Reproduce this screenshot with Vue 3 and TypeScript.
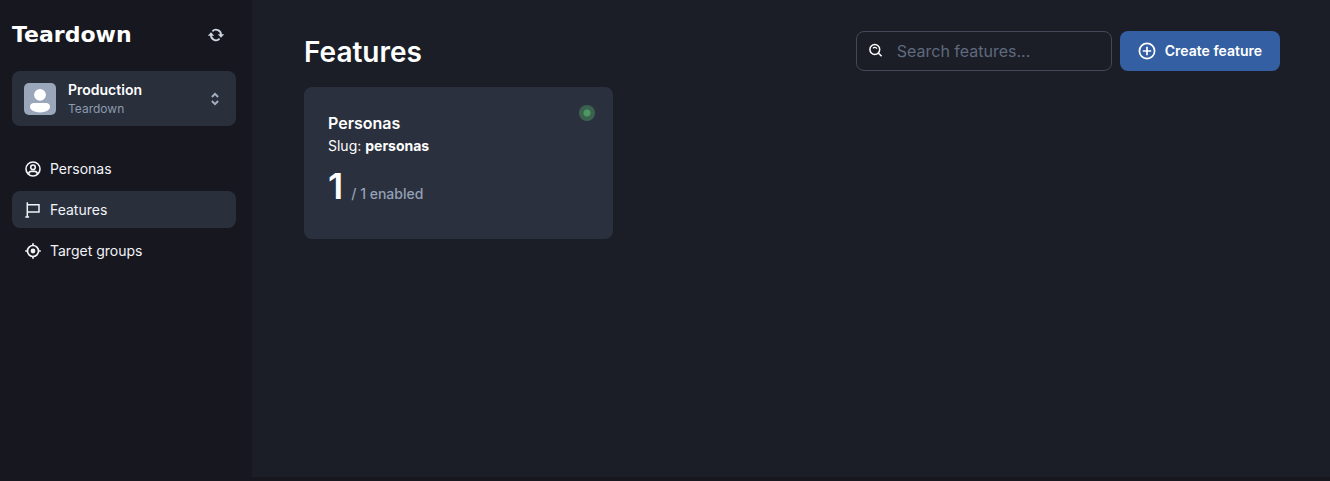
<script setup lang="ts">
import { ref, computed } from 'vue'

interface NavItem {
  id: string
  label: string
}

interface Feature {
  name: string
  slug: string
  enabled: number
  total: number
}

const navItems: NavItem[] = [
  { id: 'personas', label: 'Personas' },
  { id: 'features', label: 'Features' },
  { id: 'targets', label: 'Target groups' },
]
const active = ref<string>('features')
const query = ref<string>('')
const features: Feature[] = [{ name: 'Personas', slug: 'personas', enabled: 1, total: 1 }]

const visible = computed<Feature[]>(() =>
  features.filter((f) => f.name.toLowerCase().includes(query.value.toLowerCase())),
)
</script>

<template>
  <div class="app">
    <aside class="sidebar">
      <div class="brand">
        <span class="logo">Teardown</span>
        <button class="refresh" type="button" aria-label="Refresh">
          <svg width="18" height="18" viewBox="0 0 18 18" fill="none">
            <path d="M5.400 5.300A5 5 0 0 1 14 9M12.600 12.700A5 5 0 0 1 4 9" stroke="currentColor" stroke-width="1.8" />
            <path d="M10.800 8.300h6.400L14 11.700zM.8 9.700h6.400L4 6.300z" fill="currentColor" />
          </svg>
        </button>
      </div>

      <button class="project" type="button">
        <svg class="avatar" width="32" height="32" viewBox="0 0 32 32">
          <rect width="32" height="32" rx="5" fill="#9aa6ba" />
          <circle cx="16" cy="11.800" r="5.900" fill="#fff" />
          <path d="M10 20h12c2.400 0 4 1.600 4 3.800 0 3.600-5 5.600-10 5.600S6 27.400 6 23.800C6 21.600 7.600 20 10 20z" fill="#fff" />
        </svg>
        <span class="project-text">
          <span class="project-name">Production</span>
          <span class="project-org">Teardown</span>
        </span>
        <svg class="chevrons" width="10" height="16" viewBox="0 0 10 16" fill="none" stroke="currentColor" stroke-width="2">
          <path d="M1.900 6 5 2.900 8.100 6M1.900 10 5 13.100 8.100 10" />
        </svg>
      </button>

      <nav class="nav">
        <a
          v-for="item in navItems"
          :key="item.id"
          href="#"
          class="nav-link"
          :class="{ active: item.id === active }"
          @click.prevent="active = item.id"
        >
          <svg v-if="item.id === 'personas'" width="18" height="18" viewBox="0 0 18 18" fill="none" stroke="currentColor" stroke-width="1.600">
            <circle cx="9" cy="9" r="7" />
            <circle cx="9" cy="7.300" r="2.300" />
            <path d="M4.700 14.200c0-1.900 1.200-2.800 2.600-2.800h3.400c1.400 0 2.600.9 2.600 2.800" />
          </svg>
          <svg v-else-if="item.id === 'features'" width="18" height="18" viewBox="0 0 18 18" fill="none" stroke="currentColor" stroke-width="1.500">
            <path d="M3.300 1.200v15M1.300 16.100h3.800M3.300 3.800h11.700v7.200H3.300" />
          </svg>
          <svg v-else width="18" height="18" viewBox="0 0 18 18" fill="none" stroke="currentColor" stroke-width="1.700">
            <circle cx="9" cy="9" r="5.500" />
            <circle cx="9" cy="9" r="2.400" fill="currentColor" stroke="none" />
            <path d="M9 1.200v2.800M9 14v2.800M1.200 9h2.800M14 9h2.800" />
          </svg>
          <span>{{ item.label }}</span>
        </a>
      </nav>
    </aside>

    <main class="main">
      <header class="header">
        <h1 class="title">Features</h1>
        <div class="actions">
          <label class="search">
            <svg width="16" height="16" viewBox="0 0 16 16" fill="none" stroke="currentColor" stroke-width="1.500">
              <circle cx="6.800" cy="6.500" r="4.900" />
              <path d="M10.300 10 13.600 13.300" />
              <path d="M5 5.300c.9-1.200 3-1.200 3.900.5" stroke-width="1.200" />
            </svg>
            <input v-model="query" type="text" aria-label="Search features" placeholder="Search features..." />
          </label>
          <button class="create" type="button">
            <svg width="18" height="18" viewBox="0 0 18 18" fill="none" stroke="currentColor" stroke-width="1.700">
              <circle cx="9" cy="9" r="7.600" />
              <path d="M9 4.800v8.400M4.800 9h8.400" />
            </svg>
            <span>Create feature</span>
          </button>
        </div>
      </header>

      <section class="grid">
        <article v-for="f in visible" :key="f.slug" class="card">
          <div class="card-top">
            <h2 class="card-title">{{ f.name }}</h2>
            <span class="status" role="img" aria-label="Enabled"></span>
          </div>
          <p class="slug">Slug: <strong>{{ f.slug }}</strong></p>
          <p class="count">
            <span class="count-value">{{ f.enabled }}</span>
            <span class="count-total">/ {{ f.total }} enabled</span>
          </p>
        </article>
      </section>
    </main>
  </div>
</template>

<style>
body {
  background: #17171f;
}
</style>

<style scoped>
.app {
  display: flex;
  min-height: calc(100vh - 4px);
  background: #1b1e26;
  color: #fff;
  font-family: Inter, 'Liberation Sans', sans-serif;
  font-size: 14px;
  line-height: 20px;
}
.app * {
  box-sizing: border-box;
}
button {
  border: 0;
  font: inherit;
  color: inherit;
  cursor: pointer;
}
svg {
  display: block;
  flex: none;
}
.sidebar {
  flex: none;
  width: 252px;
  padding: 16px 16px 16px 12px;
  background: #17171f;
}
.brand {
  display: flex;
  align-items: center;
  justify-content: space-between;
  height: 38px;
  padding-right: 11px;
}
.logo {
  font: bold 22px/28px 'DejaVu Sans', sans-serif;
}
.refresh {
  padding: 0;
  background: none;
  color: #cbd5e1;
}
.project {
  display: flex;
  align-items: center;
  gap: 12px;
  width: 100%;
  margin-top: 17px;
  padding: 9px 16px 9px 12px;
  border-radius: 8px;
  background: #29303c;
  text-align: left;
}
.project-text {
  flex: 1;
}
.project-name,
.project-org {
  display: block;
}
.project-name {
  line-height: 20px;
  font-weight: 600;
}
.project-org {
  font-size: 12px;
  line-height: 17px;
  color: #8d99ae;
}
.chevrons {
  color: #a3aec0;
}
.nav {
  display: flex;
  flex-direction: column;
  gap: 4px;
  margin-top: 24px;
}
.nav-link {
  display: flex;
  align-items: center;
  gap: 8px;
  height: 37px;
  padding: 0 12px;
  border-radius: 8px;
  color: #f1f3f7;
  text-decoration: none;
}
.nav-link.active {
  background: #29303c;
}
.main {
  flex: 1;
  min-width: 0;
  padding: 31px 50px 31px 52px;
}
.header {
  display: flex;
  align-items: center;
  justify-content: space-between;
  height: 40px;
}
.title {
  margin: 0;
  padding-top: 2px;
  font-size: 28px;
  line-height: 42px;
  font-weight: 600;
}
.actions {
  display: flex;
  gap: 8px;
}
.search {
  display: flex;
  align-items: center;
  gap: 13px;
  width: 256px;
  height: 40px;
  padding: 0 11px;
  border: 1px solid #434959;
  border-radius: 8px;
}
.search input {
  flex: 1;
  min-width: 0;
  padding: 0;
  border: 0;
  outline: 0;
  background: none;
  color: #fff;
  font: inherit;
  font-size: 16px;
}
.search input::placeholder {
  color: #5f6a7e;
  opacity: 1;
}
.create {
  display: flex;
  align-items: center;
  gap: 9px;
  height: 40px;
  padding: 0 18px;
  border-radius: 8px;
  background: #345fa3;
  font-weight: 600;
}
.grid {
  display: grid;
  grid-template-columns: repeat(3, minmax(0, 1fr));
  gap: 24px;
  margin-top: 16px;
}
.card {
  padding: 24px 24px 33px;
  border-radius: 8px;
  background: #2a303d;
}
.card-top {
  display: flex;
  justify-content: space-between;
}
.card-title {
  margin: 0;
  font-size: 16px;
  line-height: 24px;
  font-weight: 600;
}
.status {
  width: 16px;
  height: 16px;
  margin: -6px -6px 0 0;
  border-radius: 50%;
  background: radial-gradient(circle, #4c9a61 3px, #3b624e 4px);
}
.slug {
  margin: 0;
  line-height: 22px;
}
.slug strong {
  font-weight: 700;
}
.count {
  display: flex;
  align-items: baseline;
  gap: 8px;
  margin: 9px 0 0;
}
.count-value {
  font-size: 36px;
  line-height: 40px;
  font-weight: 600;
}
.count-total {
  color: #94a0b5;
  font-weight: 500;
}
</style>
